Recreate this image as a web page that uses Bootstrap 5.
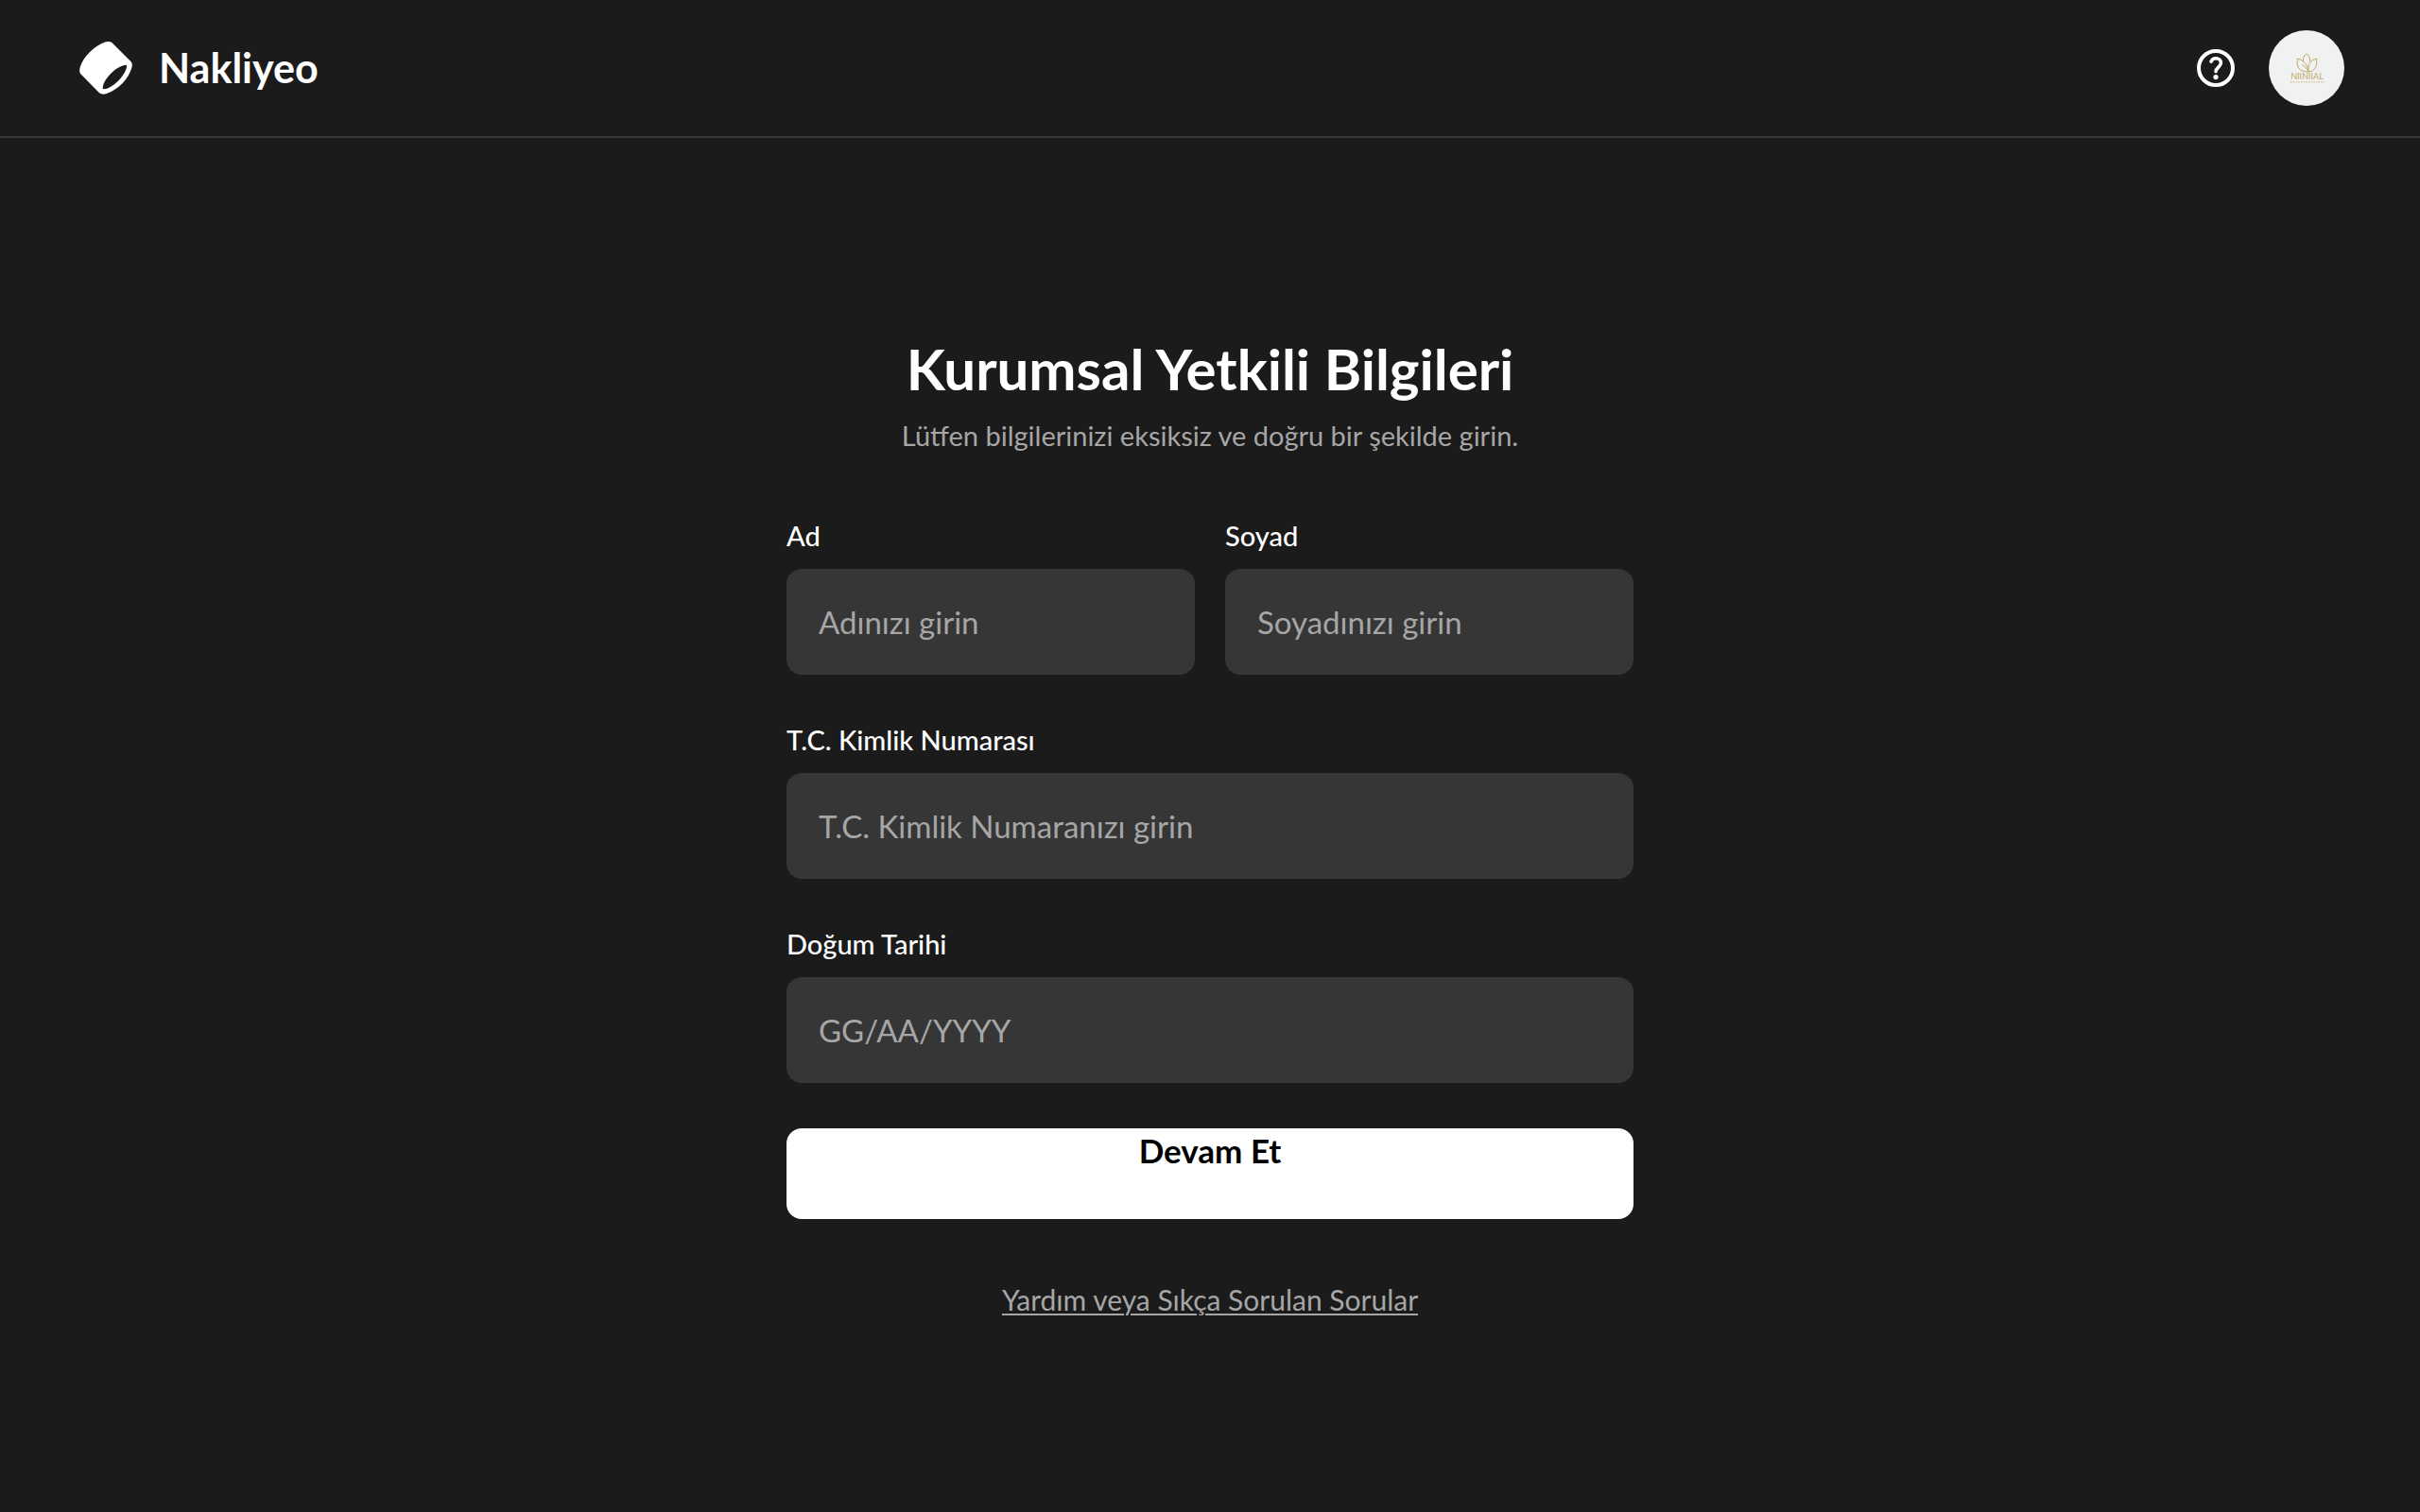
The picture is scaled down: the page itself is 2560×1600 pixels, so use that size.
<!DOCTYPE html>
<html lang="tr">
<head>
<meta charset="utf-8">
<meta name="viewport" content="width=device-width, initial-scale=1">
<title>Nakliyeo</title>
<link href="https://cdn.jsdelivr.net/npm/bootstrap@5.3.0/dist/css/bootstrap.min.css" rel="stylesheet">
<style>
  body { background: #1b1b1b; color: #fff; font-family: Lato, "Open Sans", sans-serif; font-size: 29px; line-height: 42px; }
  .site-header { padding: 32px 80px; border-bottom: 2px solid #363636; }
  .site-header .navbar-brand { color: #fff; font-size: 43px; font-weight: 700; line-height: 64px; gap: 24px; }
  .header-tools { gap: 32px; }
  .auth-panel { width: 100%; max-width: 896px; }
  .auth-title { font-size: 60px; line-height: 80px; font-weight: 700; margin-bottom: 10px; }
  .auth-intro { color: #a6a6a6; margin-bottom: 64px; }
  .auth-form { display: grid; gap: 48px; }
  .auth-form .row { --bs-gutter-x: 32px; }
  .auth-form .form-label { font-weight: 500; margin-bottom: 14px; display: block; }
  .auth-form .form-control { background: #363636; color: #fff; border: 0; border-radius: 16px; padding: 32px 34px; font-size: 33px; line-height: 48px; }
  .auth-form .form-control::placeholder { color: #a6a6a6; opacity: 1; }
  .auth-submit { background: #fff; color: #000; border: 0; border-radius: 16px; height: 96px; padding: 0; font-size: 35px; line-height: 46px; font-weight: 700; }
  .auth-submit:hover { background: #e8e8e8; color: #000; }
  .auth-help { margin-top: 64px; }
  .auth-help a { color: #a6a6a6; font-size: 30px; text-decoration-thickness: 2px; text-underline-offset: 3px; }
</style>
</head>
<body class="min-vh-100 d-flex flex-column">
<header class="site-header navbar justify-content-between">
  <a class="navbar-brand d-flex align-items-center p-0 m-0" href="#">
    <svg width="64" height="64" viewBox="12 12 192 192" aria-hidden="true">
      <path fill="#fff" fill-rule="evenodd" d="M127 27 L187 87 Q194 94 190 107 C180 141 150 175 109 190 Q95 194 87 187 L28 127 Q22 120 26 106 C36 72 72 36 108 25 Q120 22 127 27Z M174 98 C148 96 99 140 98 173 C104 179 126 169 146 150 C165 131 176 109 174 98Z"/>
    </svg>
    <span>Nakliyeo</span>
  </a>
  <div class="header-tools d-flex align-items-center">
    <a class="d-flex" href="#" aria-label="Yardım">
      <svg width="48" height="48" viewBox="0 0 24 24" fill="none" stroke="#fff" aria-hidden="true">
        <circle cx="12" cy="12" r="9" stroke-width="2"/>
        <path d="M9.5 8.6 C10 7.5 10.9 6.9 12 6.9 C13.6 6.9 14.7 7.9 14.7 9.3 C14.7 11.5 12 11.6 12 13.9" stroke-width="1.8" stroke-linecap="round"/>
        <circle cx="12" cy="16.8" r="1.3" fill="#fff" stroke="none"/>
      </svg>
    </a>
    <a class="d-flex" href="#" aria-label="Profil">
      <svg width="80" height="80" viewBox="0 0 80 80" aria-hidden="true">
        <circle cx="40" cy="40" r="40" fill="#f0f2f1"/>
        <g fill="none" stroke="#bfa968" stroke-width="1">
          <path d="M36.5 33 C36 29 37.5 26.5 40 24.8 C42.8 27 44 29.5 43.5 33"/>
          <path d="M42 44 C41 36 44 31.5 50.5 30 C51.5 38 49 43.5 42 44Z"/>
          <path d="M42 44 C41.5 37 37 31.5 30.5 30 C29 39 32 44 42 44Z"/>
          <path d="M35 36.5 C38.5 38.5 40.5 40.5 42 44"/>
        </g>
        <text x="40.5" y="52" text-anchor="middle" font-family="Lato, sans-serif" font-size="9" fill="#bfa968">NIINIIAL</text>
        <path d="M23 54.8 H59" stroke="#d3c59a" stroke-width="1.5" stroke-dasharray="1.5 1.2"/>
      </svg>
    </a>
  </div>
</header>
<main class="flex-grow-1 d-flex align-items-center justify-content-center">
  <section class="auth-panel">
    <h1 class="auth-title text-center">Kurumsal Yetkili Bilgileri</h1>
    <p class="auth-intro text-center">Lütfen bilgilerinizi eksiksiz ve doğru bir şekilde girin.</p>
    <form class="auth-form">
      <div class="row">
        <div class="col-6">
          <label class="form-label" for="ad">Ad</label>
          <input class="form-control" id="ad" type="text" placeholder="Adınızı girin">
        </div>
        <div class="col-6">
          <label class="form-label" for="soyad">Soyad</label>
          <input class="form-control" id="soyad" type="text" placeholder="Soyadınızı girin">
        </div>
      </div>
      <div>
        <label class="form-label" for="kimlik">T.C. Kimlik Numarası</label>
        <input class="form-control" id="kimlik" type="text" inputmode="numeric" placeholder="T.C. Kimlik Numaranızı girin">
      </div>
      <div>
        <label class="form-label" for="dogum">Doğum Tarihi</label>
        <input class="form-control" id="dogum" type="text" placeholder="GG/AA/YYYY">
      </div>
      <button class="auth-submit btn w-100 d-flex align-items-start justify-content-center" type="submit">Devam Et</button>
    </form>
    <p class="auth-help text-center mb-0"><a href="#">Yardım veya Sıkça Sorulan Sorular</a></p>
  </section>
</main>
<script src="https://cdn.jsdelivr.net/npm/bootstrap@5.3.0/dist/js/bootstrap.bundle.min.js"></script>
</body>
</html>
